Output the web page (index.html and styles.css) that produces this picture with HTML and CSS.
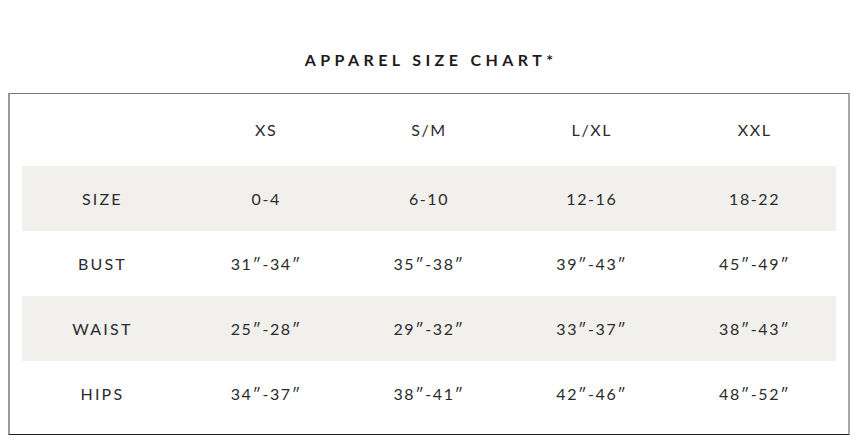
FILE: index.html
```html
<!DOCTYPE html>
<html lang="en">
<head>
<meta charset="utf-8">
<title>Apparel Size Chart</title>
<link rel="stylesheet" href="styles.css">
</head>
<body>
<main class="page">
  <h1 class="title">APPAREL SIZE CHART*</h1>
  <section class="chart">
    <div class="row head">
      <div class="cell"></div>
      <div class="cell">XS</div>
      <div class="cell">S/M</div>
      <div class="cell">L/XL</div>
      <div class="cell">XXL</div>
    </div>
    <div class="row shaded">
      <div class="cell label">SIZE</div>
      <div class="cell">0-4</div>
      <div class="cell">6-10</div>
      <div class="cell">12-16</div>
      <div class="cell">18-22</div>
    </div>
    <div class="row">
      <div class="cell label">BUST</div>
      <div class="cell">31″-34″</div>
      <div class="cell">35″-38″</div>
      <div class="cell">39″-43″</div>
      <div class="cell">45″-49″</div>
    </div>
    <div class="row shaded">
      <div class="cell label">WAIST</div>
      <div class="cell">25″-28″</div>
      <div class="cell">29″-32″</div>
      <div class="cell">33″-37″</div>
      <div class="cell">38″-43″</div>
    </div>
    <div class="row">
      <div class="cell label">HIPS</div>
      <div class="cell">34″-37″</div>
      <div class="cell">38″-41″</div>
      <div class="cell">42″-46″</div>
      <div class="cell">48″-52″</div>
    </div>
  </section>
</main>
</body>
</html>
```

FILE: styles.css
```css
html, body {
  margin: 0;
  padding: 0;
  background: #ffffff;
}

body {
  font-family: Lato, "Open Sans", "Liberation Sans", sans-serif;
  color: #222222;
}

.page {
  padding: 50px 11px 0 8px;
}

.title {
  margin: 0 0 23px;
  font-size: 16px;
  line-height: 20px;
  font-weight: 700;
  letter-spacing: 4.4px;
  text-align: center;
  color: #1c1c1c;
  padding-left: 4px;
}

.chart {
  border-top: 1px solid #7a7a7a;
  border-left: 2px solid #9a9a9a;
  border-right: 2px solid #a8a8a8;
  border-bottom: 1px solid #1e1e1e;
  padding: 0 12px 8px 12px;
  display: flex;
  flex-direction: column;
}

.row {
  display: grid;
  grid-template-columns: repeat(5, 1fr);
  height: 65px;
  align-items: center;
}

.row.head {
  height: 72px;
}

.row.shaded {
  background: #f1f0ec;
}

.cell {
  text-align: center;
  font-size: 16px;
  line-height: 20px;
  font-weight: 400;
  letter-spacing: 1.6px;
  color: #2b2b2b;
}

.cell.label {
  letter-spacing: 2.2px;
  padding-right: 2px;
}
```
